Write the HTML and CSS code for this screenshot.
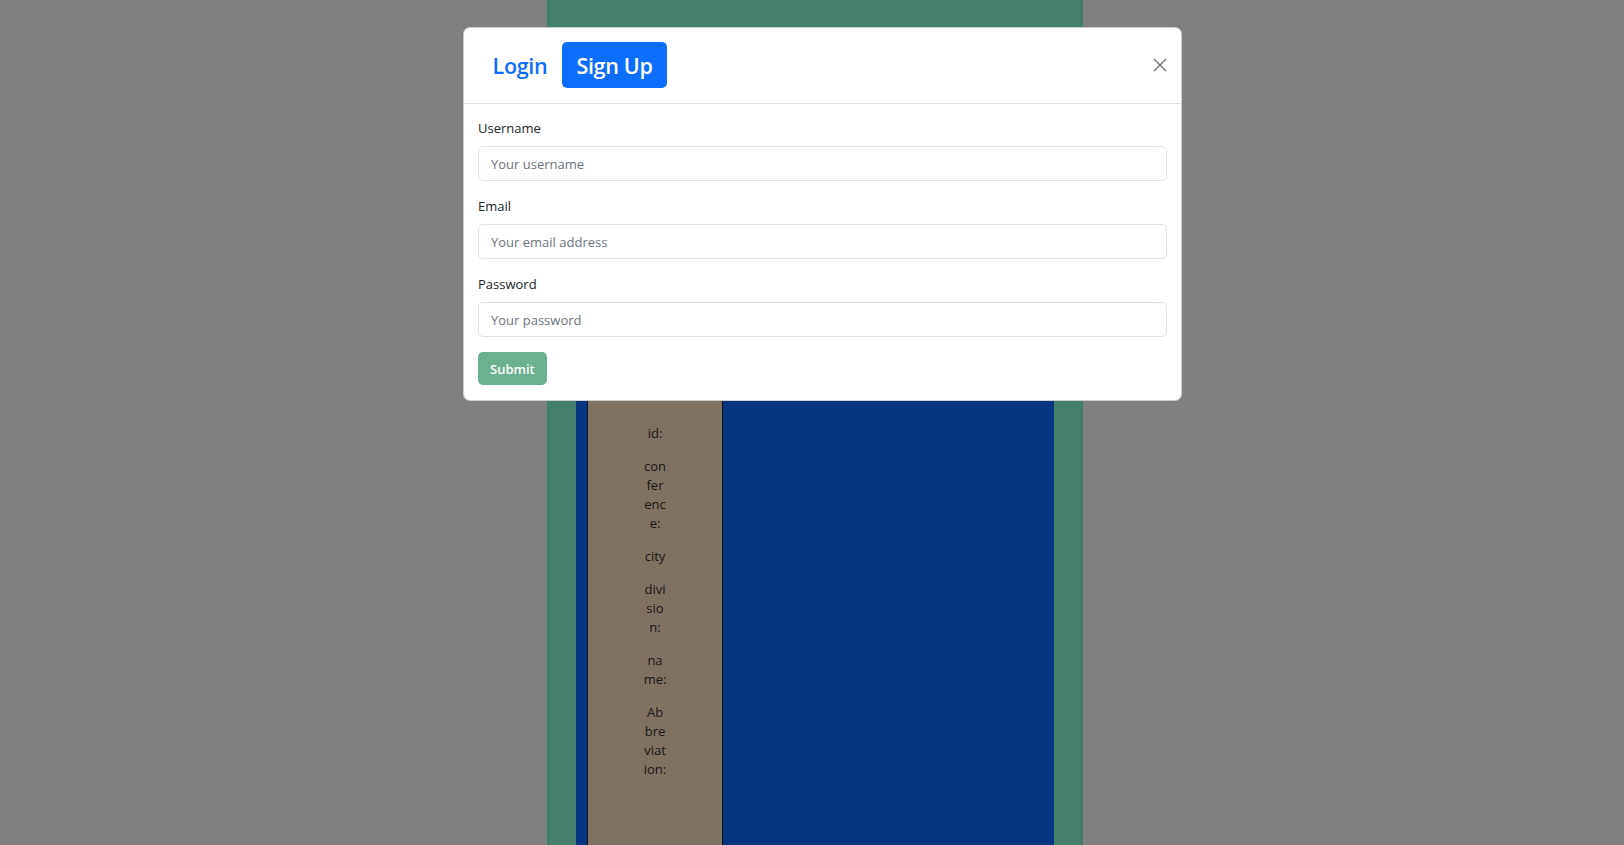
FILE: index.html
```html
<!DOCTYPE html>
<html lang="en">
<head>
<meta charset="utf-8">
<title>Teams</title>
<link rel="stylesheet" href="styles.css">
</head>
<body>
<div class="page">
  <div class="panel">
    <div class="card">
      <div class="details">
        <p class="field">id:</p>
        <p class="field">conference:</p>
        <p class="field">city</p>
        <p class="field">division:</p>
        <p class="field">name:</p>
        <p class="field">Abbreviation:</p>
      </div>
      <div class="card-rest"></div>
    </div>
  </div>
</div>

<div class="modal">
  <div class="modal-header">
    <nav class="tabs">
      <a class="tab">Login</a>
      <a class="tab active">Sign Up</a>
    </nav>
    <button class="close" aria-label="Close">
      <svg width="14" height="14" viewBox="0 0 14 14"><path d="M1 1 L13 13 M13 1 L1 13" stroke="#707070" stroke-width="1.4" fill="none"/></svg>
    </button>
  </div>
  <form class="modal-body">
    <div class="group">
      <label class="label">Username</label>
      <input class="input" type="text" placeholder="Your username">
    </div>
    <div class="group">
      <label class="label">Email</label>
      <input class="input" type="email" placeholder="Your email address">
    </div>
    <div class="group">
      <label class="label">Password</label>
      <input class="input" type="password" placeholder="Your password">
    </div>
    <button class="submit" type="button" disabled>Submit</button>
  </form>
</div>
</body>
</html>
```

FILE: styles.css
```css
* { box-sizing: border-box; }

html, body {
  margin: 0;
  height: 845px;
  overflow: hidden;
}

body {
  background: #808080;
  font-family: "Open Sans", "Noto Sans", sans-serif;
  font-size: 13px;
  color: #212529;
}

.page {
  width: 536px;
  margin-left: 547px;
  height: 845px;
  background: #42806b;
  padding: 60px 29px 0 29px;
}

.panel {
  height: 100%;
}

.card {
  display: flex;
  height: 100%;
  background: #053580;
  padding-left: 11px;
}

.details {
  width: 136px;
  background: #807262;
  border-left: 1px solid #141414;
  border-right: 1px solid #141414;
  padding-top: 364px;
  color: #141414;
}

.field {
  width: 23.5px;
  margin: 0 auto 14px auto;
  text-align: center;
  line-height: 19px;
  word-break: break-all;
}

.card-rest {
  flex: 1;
}

.modal {
  position: absolute;
  left: 463px;
  top: 27px;
  width: 719px;
  background: #fff;
  border: 1px solid rgba(0, 0, 0, 0.2);
  border-radius: 7px;
}

.modal-header {
  display: flex;
  align-items: center;
  justify-content: space-between;
  padding: 14px 14px 15px 14px;
  border-bottom: 1px solid #dee2e6;
}

.tabs {
  display: flex;
}

.tab {
  height: 46px;
  display: flex;
  align-items: center;
  padding: 0 14.5px;
  font-size: 21.5px;
  font-weight: 600;
  color: #0d6efd;
  border-radius: 5px;
  letter-spacing: -0.3px;
}

.tab.active {
  background: #0d6efd;
  color: #fff;
}

.close {
  border: 0;
  background: none;
  padding: 0;
  width: 14px;
  height: 14px;
  display: flex;
}

.modal-body {
  padding: 14px 14px 15px 14px;
  margin: 0;
}

.group {
  margin-bottom: 15px;
}

.label {
  display: block;
  line-height: 21px;
  margin-bottom: 7px;
}

.input {
  display: block;
  width: 100%;
  height: 35px;
  padding: 0 12px;
  border: 1px solid #dee2e6;
  border-radius: 5px;
  font-family: inherit;
  font-size: 13px;
  color: #212529;
  background: #fff;
}

.input::placeholder {
  color: #6c757d;
}

.submit {
  height: 33px;
  padding: 0 12px;
  border: 0;
  border-radius: 5px;
  background: rgb(106, 177, 144);
  color: #fff;
  font-family: inherit;
  font-size: 13px;
  font-weight: 600;
}
```
